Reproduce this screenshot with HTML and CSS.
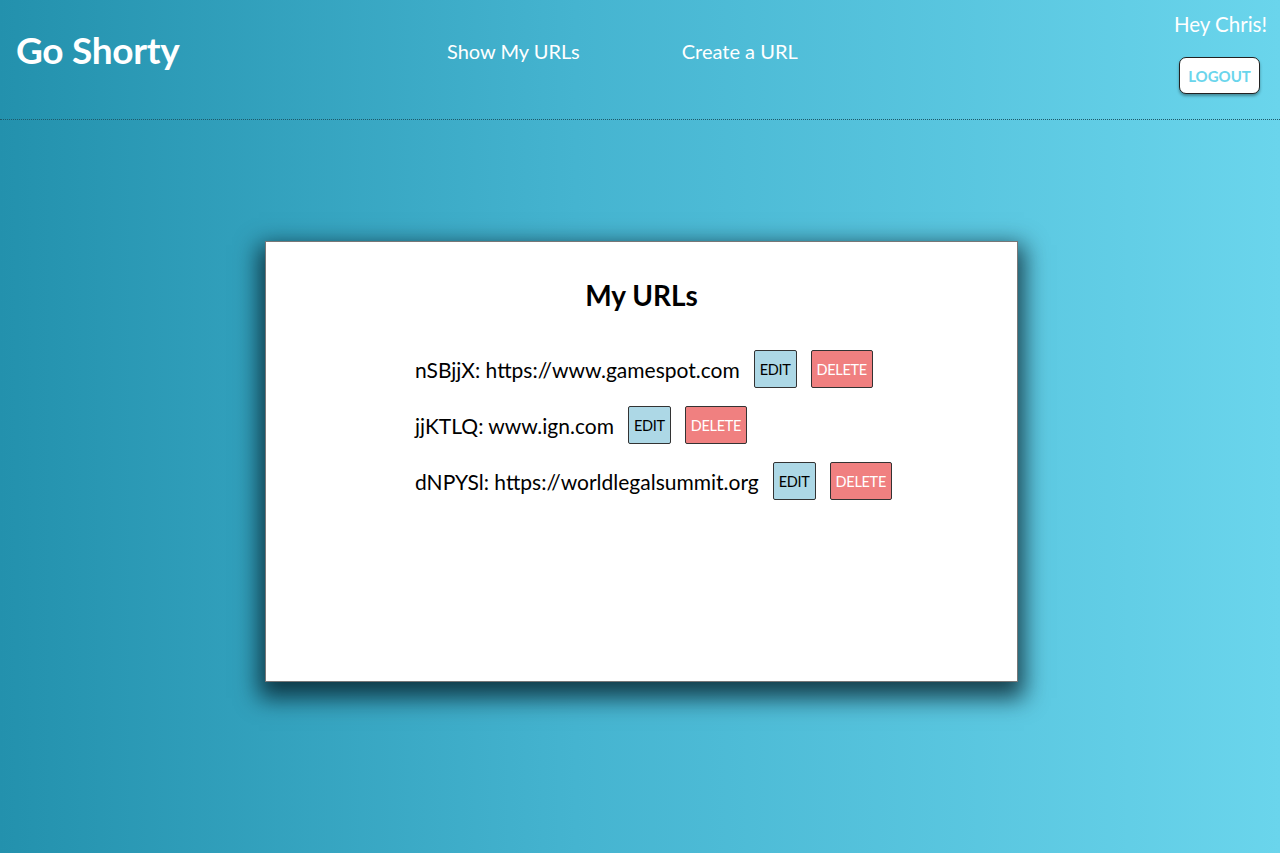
FILE: index.html
```html
<!DOCTYPE html>
<html>
<head>
<meta charset="utf-8">
<title>Go Shorty</title>
<link rel="stylesheet" href="styles.css">
</head>
<body>
<div class="page">
  <header class="header">
    <div class="logo">Go Shorty</div>
    <nav class="nav">
      <a class="nav-link" href="#">Show My URLs</a>
      <a class="nav-link" href="#">Create a URL</a>
    </nav>
    <div class="user">
      <div class="greeting">Hey Chris!</div>
      <button class="logout">LOGOUT</button>
    </div>
  </header>
  <main class="main">
    <section class="card">
      <h1 class="title">My URLs</h1>
      <ul class="url-list">
        <li class="url-row"><span class="url-text">nSBjjX: https://www.gamespot.com</span><button class="btn btn-edit">EDIT</button><button class="btn btn-delete">DELETE</button></li>
        <li class="url-row"><span class="url-text">jjKTLQ: www.ign.com</span><button class="btn btn-edit">EDIT</button><button class="btn btn-delete">DELETE</button></li>
        <li class="url-row"><span class="url-text">dNPYSl: https://worldlegalsummit.org</span><button class="btn btn-edit">EDIT</button><button class="btn btn-delete">DELETE</button></li>
      </ul>
    </section>
  </main>
</div>
</body>
</html>
```
FILE: styles.css
```css
* { box-sizing: border-box; }
html, body { margin: 0; padding: 0; height: 100%; }
body {
  font-family: Lato, "Noto Sans", sans-serif;
  background: linear-gradient(to right, #2391ad 0%, #45b4d0 45%, #6ad5ec 100%);
  min-height: 853px;
  overflow: hidden;
}
.page { min-height: 853px; display: flex; flex-direction: column; }
.header {
  height: 120px;
  border-bottom: 1px dotted #1d5a6a;
  display: flex;
  align-items: flex-start;
}
.logo {
  color: #fff;
  font-size: 37px;
  font-weight: 700;
  padding: 31px 0 0 16px;
  width: 447px;
  line-height: 1;
  letter-spacing: -0.3px;
}
.nav { display: flex; gap: 102px; padding-top: 38px; }
.nav-link {
  color: #fff;
  text-decoration: none;
  font-size: 20px;
  line-height: 26px;
}
.user {
  margin-left: auto;
  display: flex;
  flex-direction: column;
  align-items: flex-end;
  padding: 11px 13px 0 0;
}
.greeting { color: #fff; font-size: 20.5px; line-height: 26px; }
.logout {
  margin-top: 20px;
  margin-right: 7px;
  width: 81px;
  height: 37px;
  background: #fff;
  border: 1px solid #222;
  border-radius: 7px;
  box-shadow: 0 2px 3px rgba(0,0,0,0.35);
  color: #6ad5ec;
  font-family: Lato, "Noto Sans", sans-serif;
  font-weight: 700;
  font-size: 15px;
  padding: 0;
}
.main { display: flex; justify-content: center; padding: 121px 0 0 3px; }
.card {
  width: 753px;
  height: 441px;
  background: #fff;
  border: 1px solid #777;
  box-shadow: 0 10px 22px 6px rgba(0, 20, 30, 0.75);
  padding: 35px 0 0 149px;
}
.title {
  margin: 0 0 37px -149px;
  text-align: center;
  font-size: 28px;
  font-weight: 700;
  line-height: 36px;
}
.url-list { list-style: none; margin: 0; padding: 0; display: flex; flex-direction: column; gap: 18px; }
.url-row { display: flex; align-items: center; gap: 14px; height: 38px; }
.url-text { font-size: 21px; color: #000; }
.btn {
  height: 38px;
  border: 1px solid #333;
  border-radius: 2px;
  font-family: Lato, "Noto Sans", sans-serif;
  font-size: 14.5px;
  letter-spacing: -0.3px;
  padding: 0 5px;
}
.btn-edit { background: #add8e6; color: #000; }
.btn-delete { background: #f08080; color: #fff; }
```
